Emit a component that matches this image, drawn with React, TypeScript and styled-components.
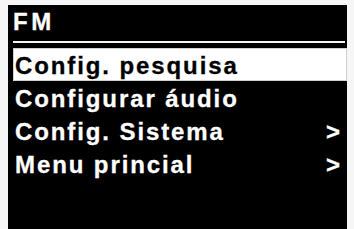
import React from "react";
import styled, { createGlobalStyle } from "styled-components";

const Global = createGlobalStyle`
  html, body {
    margin: 0;
    padding: 0;
    background: #f6f6f6;
    height: 100%;
    overflow: hidden;
  }
  #root { height: 100%; }
`;

const Page = styled.div`
  height: 229px;
  padding: 5px 7px 0 8px;
  box-sizing: border-box;
  display: flex;
`;

const Screen = styled.div`
  flex: 1;
  background: #000;
  display: flex;
  flex-direction: column;
  font-family: "Liberation Sans", Arial, Helvetica, sans-serif;
  font-weight: 700;
  color: #fff;
`;

const Header = styled.div`
  padding: 6px 0 0 5px;
  height: 23px;
  font-size: 24px;
  line-height: 22px;
  letter-spacing: 3.5px;
  -webkit-text-stroke: 0.3px #fff;
`;

const Divider = styled.div`
  height: 2px;
  margin: 7px 2px 0 5px;
  background: #f4f4f4;
`;

const List = styled.div`
  margin: 5px 0 0 5px;
  display: flex;
  flex-direction: column;
`;

const Row = styled.div<{ $selected?: boolean }>`
  height: 33px;
  box-sizing: border-box;
  padding: 3px 7px 0 2px;
  display: flex;
  align-items: center;
  justify-content: space-between;
  font-size: 24px;
  line-height: 22px;
  letter-spacing: 1.9px;
  background: ${(p) => (p.$selected ? "#fff" : "transparent")};
  color: ${(p) => (p.$selected ? "#000" : "#fff")};
  -webkit-text-stroke: 0.3px ${(p) => (p.$selected ? "#000" : "#fff")};
  box-shadow: ${(p) => (p.$selected ? "inset 0 0 0 1px #cfcfcf" : "none")};
`;

const Label = styled.span`
  white-space: nowrap;
`;

const Chevron = styled.span`
  letter-spacing: 0;
  font-size: 24px;
`;

const items = [
  { label: "Config. pesquisa", selected: true, sub: false },
  { label: "Configurar áudio", selected: false, sub: false },
  { label: "Config. Sistema", selected: false, sub: true },
  { label: "Menu princial", selected: false, sub: true },
];

export default function App() {
  return (
    <>
      <Global />
      <Page>
        <Screen>
          <Header>FM</Header>
          <Divider />
          <List>
            {items.map((it) => (
              <Row key={it.label} $selected={it.selected}>
                <Label>{it.label}</Label>
                {it.sub && <Chevron>&gt;</Chevron>}
              </Row>
            ))}
          </List>
        </Screen>
      </Page>
    </>
  );
}
